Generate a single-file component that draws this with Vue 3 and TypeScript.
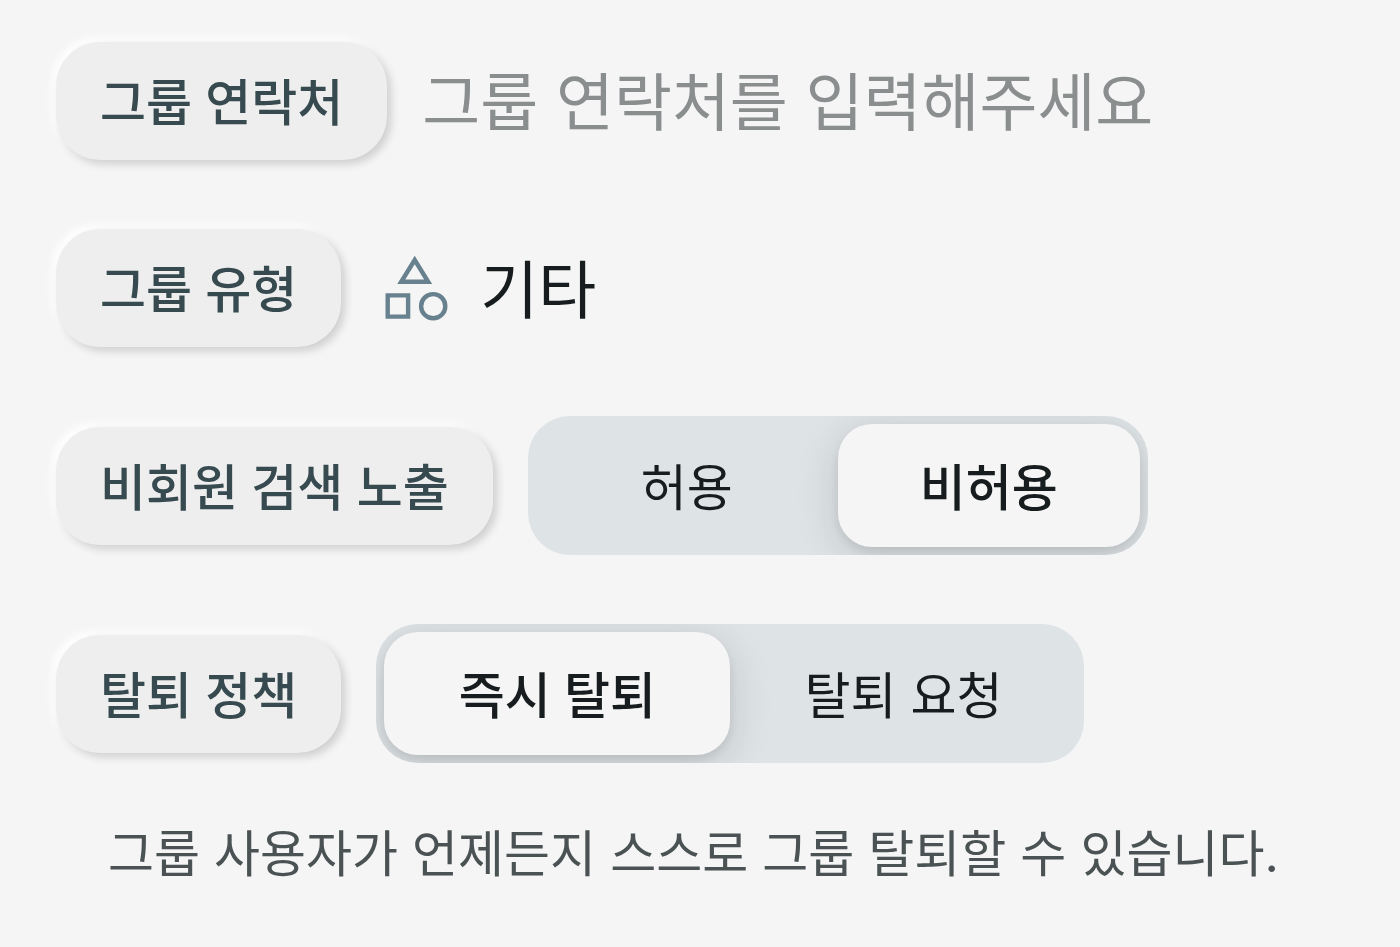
<script setup lang="ts">
import { ref } from 'vue'

interface Segment {
  value: string
  label: string
}

interface Policy {
  name: string
  title: string
  options: Segment[]
}

const contact = ref('')
const selected = ref<Record<string, string>>({
  exposure: 'deny',
  leave: 'instant',
})

const policies: Policy[] = [
  {
    name: 'exposure',
    title: '비회원 검색 노출',
    options: [
      { value: 'allow', label: '허용' },
      { value: 'deny', label: '비허용' },
    ],
  },
  {
    name: 'leave',
    title: '탈퇴 정책',
    options: [
      { value: 'instant', label: '즉시 탈퇴' },
      { value: 'request', label: '탈퇴 요청' },
    ],
  },
]
</script>

<template>
  <main class="form">
    <div class="row">
      <label class="tag" for="contact">그룹 연락처</label>
      <input
        id="contact"
        v-model="contact"
        class="contact"
        type="text"
        placeholder="그룹 연락처를 입력해주세요"
      />
    </div>

    <div class="row">
      <span class="tag">그룹 유형</span>
      <div class="kind">
        <svg class="kind-icon" viewBox="0 0 78 78" aria-hidden="true">
          <path d="M38.7 11L52.2 32.8H25.2z" />
          <path d="M11.7 46.4H32.1V67.6H11.7z" />
          <circle cx="57.2" cy="57.2" r="12.1" />
        </svg>
        <span class="kind-name">기타</span>
      </div>
    </div>

    <div v-for="policy in policies" :key="policy.name" class="row">
      <span :id="`${policy.name}-title`" class="tag">{{ policy.title }}</span>
      <div class="segments" role="radiogroup" :aria-labelledby="`${policy.name}-title`">
        <label
          v-for="option in policy.options"
          :key="option.value"
          class="segment"
          :class="{ active: selected[policy.name] === option.value }"
        >
          <input
            v-model="selected[policy.name]"
            class="segment-input"
            type="radio"
            :name="policy.name"
            :value="option.value"
          />
          {{ option.label }}
        </label>
      </div>
    </div>

    <p class="hint">그룹 사용자가 언제든지 스스로 그룹 탈퇴할 수 있습니다.</p>
  </main>
</template>

<style>
body {
  background: #f5f5f5;
}
</style>

<style scoped>
.form {
  padding: 42px 56px;
  color: #171d1e;
  font-family: Inter, 'Noto Sans CJK KR', sans-serif;
  font-size: 50px;
  line-height: 74px;
}

.row {
  display: flex;
  align-items: center;
  gap: 35px;
}

.row + .row {
  margin-top: 69px;
}

.tag {
  flex: none;
  padding: 24px 44px 20px;
  border-radius: 44px;
  background: #eeeeee;
  box-shadow:
    4px 4px 8px rgba(0, 0, 0, 0.16),
    -4px -4px 8px #ffffff;
  color: #364a4f;
  font-weight: 500;
}

.contact {
  flex: 1;
  min-width: 0;
  height: 96px;
  padding: 2px 0 0;
  border: 0;
  outline: 0;
  background: transparent;
  color: inherit;
  font-family: inherit;
  font-size: 63px;
}

.contact::placeholder {
  color: #8b8e8e;
  opacity: 1;
}

.kind {
  display: flex;
  align-items: center;
  gap: 26px;
  font-size: 63px;
}

.kind-name {
  padding-top: 4px;
}

.kind-icon {
  width: 78px;
  height: 78px;
  fill: none;
  stroke: #68818f;
  stroke-width: 4.4;
}

.segments {
  display: grid;
  grid-template-columns: 1fr 1fr;
  padding: 8px;
  border-radius: 42px;
  background: #dee3e6;
  overflow: hidden;
}

.segment {
  position: relative;
  box-sizing: border-box;
  min-width: 302px;
  padding: 27px 74px 21px;
  border-radius: 34px;
  line-height: 75px;
  text-align: center;
  white-space: nowrap;
  cursor: pointer;
}

.segment.active {
  background: #f5f5f5;
  box-shadow:
    0 10px 44px rgba(0, 0, 0, 0.14),
    0 4px 8px rgba(0, 0, 0, 0.08);
  font-weight: 500;
}

.segment-input {
  position: absolute;
  inset: 0;
  margin: 0;
  opacity: 0;
  cursor: pointer;
}

.hint {
  margin: 54px 52px 0;
  color: #4a5254;
}
</style>
